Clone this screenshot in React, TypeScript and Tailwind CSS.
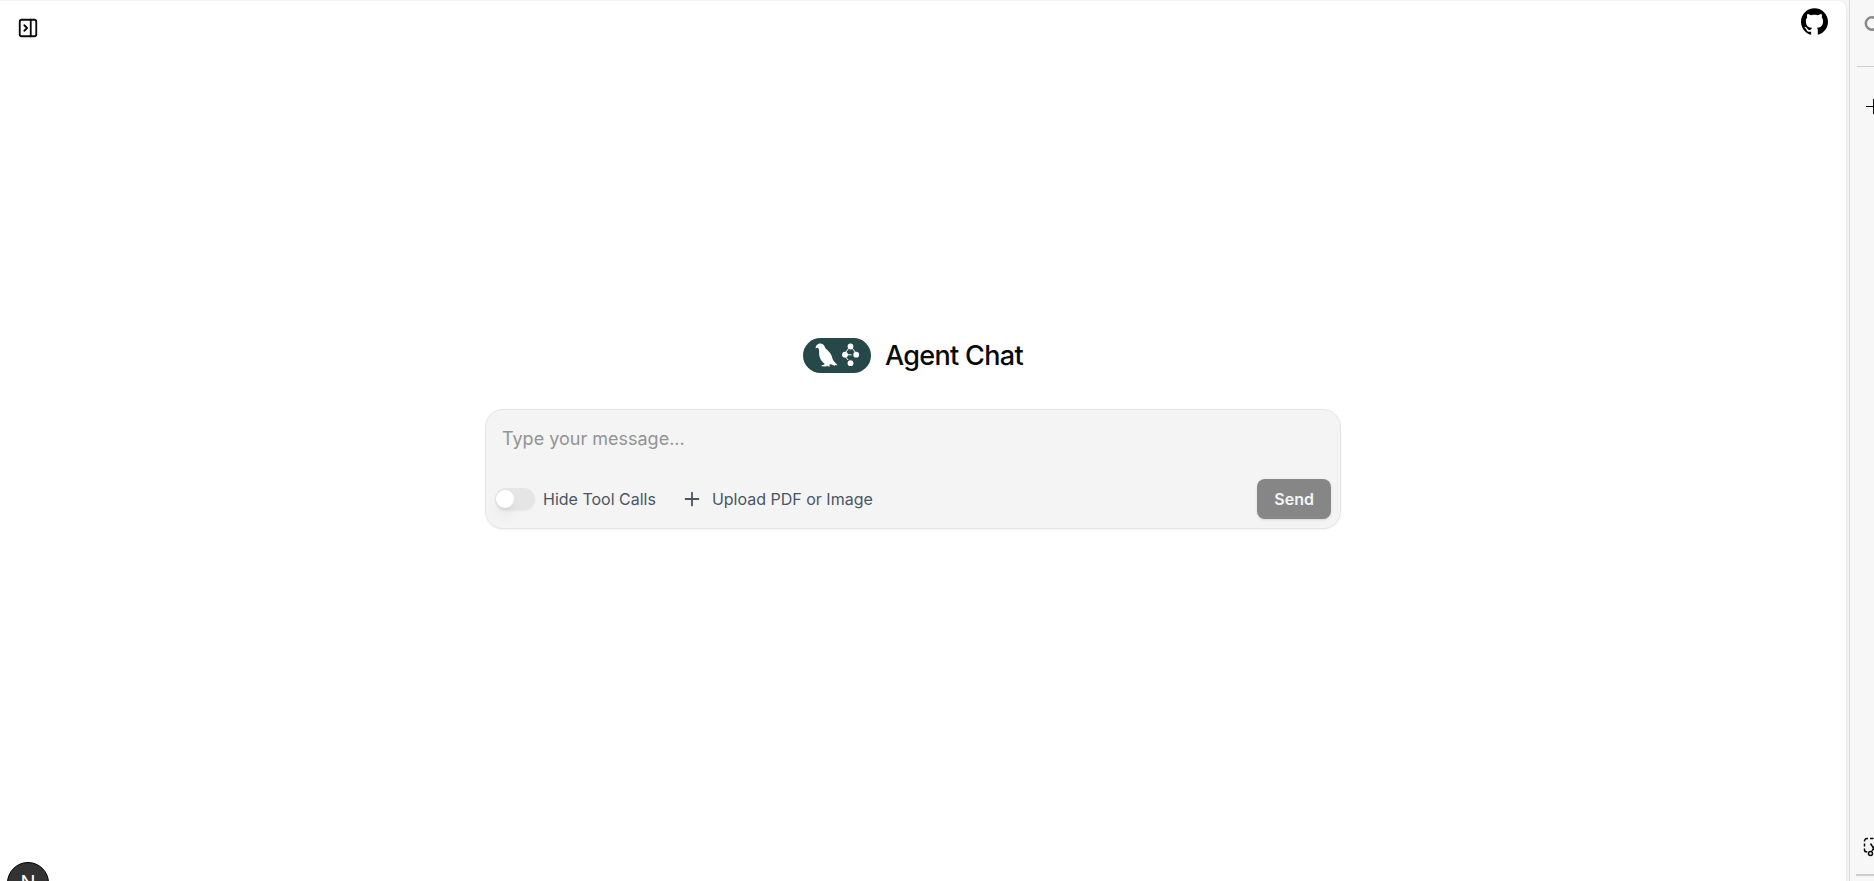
import { useState } from "react";
import { SiGithub } from "react-icons/si";
import { Plus } from "lucide-react";

function PanelIcon() {
  return (
    <svg className="size-[22px]" viewBox="0 0 24 24" fill="none" stroke="currentColor" strokeWidth="2" strokeLinecap="round" strokeLinejoin="round">
      <rect x="3" y="3" width="18" height="18" rx="2" />
      <path d="M15 3v18M8 9l3 3-3 3" />
    </svg>
  );
}

function GraphLogo() {
  return (
    <svg className="h-[35px] w-[68px]" viewBox="0 0 68 35" role="img" aria-label="Agent Chat logo">
      <rect width="68" height="35" rx="17.5" fill="#264849" />
      <g fill="#fff">
        <path d="M12.6 10.6c.1-2 .5-3 1.3-3.6.7-1 1.8-1.6 3.3-1.6 2 0 3.5 1 4.2 2.7l1.2 2.3c2.4 1.9 4.7 4.3 5.9 7.2.8 2.2 1 3.9 2.2 5.4l3.9 4.2-2.7-.3.3 1.1-3.4-1.6-1.5-.1-1 .8.7 1.3h-1.7l-1.2-.7-1 .7-4.5-.2v-.9l2.4-.6.7-.8c-3-2.3-5.1-5.400-5.500-8.900l-.2-5.200c-.4-1.300-1-2-1.800-2.100-.6 0-1.100.3-1.600.9z" />
        <circle cx="47.5" cy="8.5" r="2.9" />
        <circle cx="42" cy="16.700" r="2.9" />
        <circle cx="53.2" cy="16.700" r="2.9" />
        <circle cx="47.5" cy="25.200" r="2.9" />
      </g>
      <path d="M45.5 10.5l-3 4M49.500 10.500l3 4M42 16.800h6.500M42.500 19l2.700 3" stroke="#fff" strokeWidth="1" fill="none" />
    </svg>
  );
}

function ScreenshotIcon() {
  return (
    <svg className="size-[22px] shrink-0" viewBox="0 0 22 22" fill="none" stroke="currentColor" strokeWidth="1.5">
      <path d="M1.5 4.5V4A2.5 2.5 0 0 1 4 1.5h1M7 1.5h3.5M12.5 1.5H16M1.5 6.5v3M1.5 11.5V13c0 1 .8 1.8 1.8 1.8h1M7.5 6.5l5.5 8.5M13 6.5L9 14" />
      <circle cx="7.5" cy="16.5" r="2" />
      <circle cx="14.5" cy="16.5" r="2" />
    </svg>
  );
}

function ChatForm() {
  const [message, setMessage] = useState("");
  const [hideToolCalls, setHideToolCalls] = useState(false);

  return (
    <form
      onSubmit={(e) => e.preventDefault()}
      className="flex w-full max-w-[856px] flex-col rounded-[18px] border border-[#e4e4e4] bg-[#f4f4f4] shadow-xs"
    >
      <textarea
        aria-label="Message"
        value={message}
        onChange={(e) => setMessage(e.target.value)}
        placeholder="Type your message..."
        className="block h-[69px] resize-none px-4 pt-[15px] text-[18px] leading-7 outline-none placeholder:text-[#939393]"
      />
      <div className="flex items-center px-[9px] pb-[9px]">
        <label className="flex items-center gap-2 text-[16px] text-[#4a5565]">
          <input
            type="checkbox"
            role="switch"
            checked={hideToolCalls}
            onChange={(e) => setHideToolCalls(e.target.checked)}
            className="flex h-[22px] w-10 appearance-none items-center rounded-full bg-[#e5e5e5] px-px shadow-xs before:size-[18px] before:rounded-full before:bg-white before:shadow-lg checked:justify-end checked:bg-neutral-900"
          />
          Hide Tool Calls
        </label>
        <label className="ml-[25px] flex cursor-pointer items-center gap-[9px] text-[16px] text-[#4a5565]">
          <Plus className="size-[22px]" />
          Upload PDF or Image
          <input type="file" multiple accept="image/*,application/pdf" className="hidden" />
        </label>
        <button
          type="submit"
          disabled={!message.trim()}
          className="ml-auto h-10 rounded-lg bg-[#171717] px-[17px] text-[16px] font-semibold text-neutral-50 shadow-sm disabled:bg-[#868686] disabled:text-[#f5f5f5]"
        >
          Send
        </button>
      </div>
    </form>
  );
}

function BrowserSidebar() {
  return (
    <aside className="ml-[3px] flex w-[25px] shrink-0 flex-col overflow-hidden border-l border-[#dcdcdc] bg-[#f7f7f7] pt-4">
      <button aria-label="Search" className="ml-[14px] flex w-6">
        <svg className="size-4 shrink-0 text-[#8a8a8a]" viewBox="0 0 16 16" fill="none" stroke="currentColor" strokeWidth="2.5">
          <circle cx="8" cy="7.5" r="6.2" />
        </svg>
      </button>
      <hr className="mt-[34px] ml-[7px] w-10 border-[#cfcfcf]" />
      <button aria-label="Add" className="mt-[31px] ml-4 flex w-6">
        <svg className="size-4 shrink-0" viewBox="0 0 16 16" stroke="currentColor">
          <path d="M0 8.5h16M7.5 1v15" />
        </svg>
      </button>
      <button aria-label="Screenshot" className="mt-auto ml-[13px] flex w-6">
        <ScreenshotIcon />
      </button>
      <hr className="mt-[15px] mb-[5px] ml-[6px] w-10 border-t-2 border-[#cfcfcf]" />
    </aside>
  );
}

export default function App() {
  return (
    <div className="flex h-screen overflow-hidden bg-[#f5f5f5] font-['Inter',sans-serif] text-[#0a0a0a]">
      <main className="relative mt-px flex min-w-0 flex-1 flex-col rounded-tr-lg bg-white shadow-sm">
        <header className="flex items-start justify-between pt-[7px] pr-[18px] pl-[17px]">
          <button aria-label="Toggle history" className="mt-[9px]">
            <PanelIcon />
          </button>
          <a href="https://github.com/langchain-ai/agent-chat-ui" aria-label="GitHub">
            <SiGithub className="size-[27px] text-black" />
          </a>
        </header>
        <div className="flex flex-1 flex-col items-center justify-center gap-9 pr-5 pb-[54px]">
          <div className="flex items-center gap-[14px]">
            <GraphLogo />
            <h1 className="text-[27px] leading-[35px] font-medium tracking-tight">Agent Chat</h1>
          </div>
          <ChatForm />
        </div>
        <button
          aria-label="Open developer tools"
          className="absolute -bottom-[23px] left-[7px] flex size-[42px] items-center justify-center rounded-full border border-black bg-[#333] text-[20px] text-white shadow-lg"
        >
          N
        </button>
      </main>
      <BrowserSidebar />
    </div>
  );
}
